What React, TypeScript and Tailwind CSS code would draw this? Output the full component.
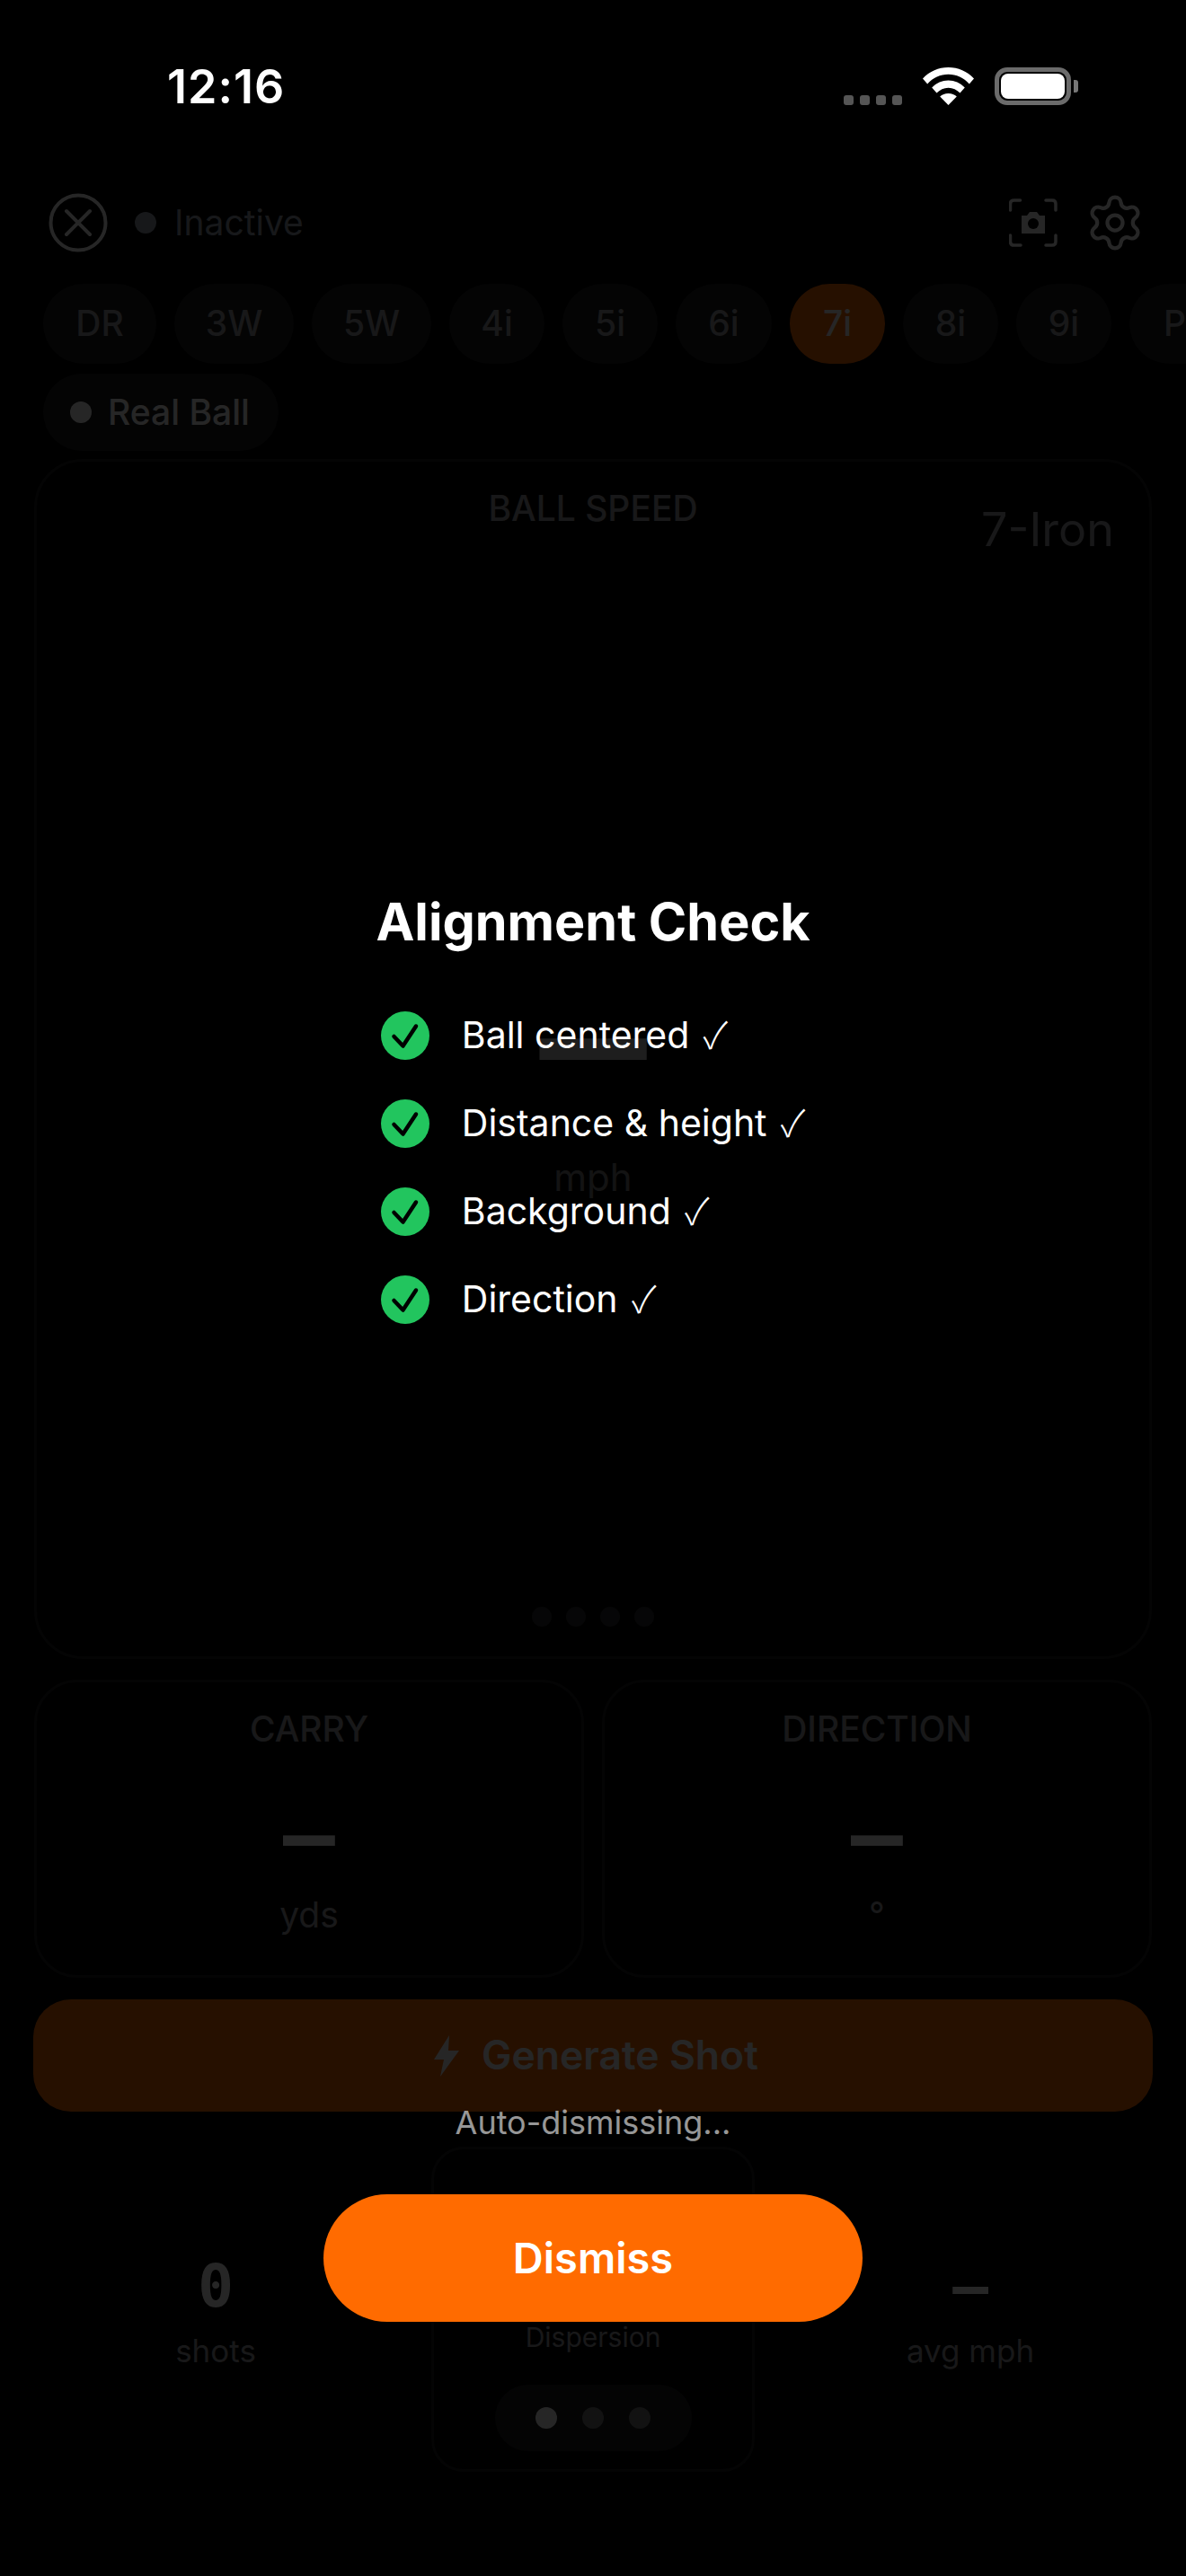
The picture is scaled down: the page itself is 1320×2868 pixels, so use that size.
import { Settings } from "lucide-react";

const clubs = [
  { name: "DR", width: "w-[126px]" },
  { name: "3W", width: "w-[133px]" },
  { name: "5W", width: "w-[133px]" },
  { name: "4i", width: "w-[106px]" },
  { name: "5i", width: "w-[106px]" },
  { name: "6i", width: "w-[107px]" },
  { name: "7i", width: "w-[106px]" },
  { name: "8i", width: "w-[106px]" },
  { name: "9i", width: "w-[106px]" },
  { name: "PW", width: "w-[140px]" },
];
const checks = ["Ball centered", "Distance & height", "Background", "Direction"];
const mono = "font-['DejaVu_Sans_Mono',monospace]";

function StatusBar() {
  return (
    <div className="relative z-20 h-[215px] shrink-0 -mb-[215px] flex items-start justify-between pl-[186px] pr-[120px] pt-[66px]">
      <span className="text-[52px] leading-[62px] font-semibold text-white tracking-[1px]">12:16</span>
      <div className="flex items-start pt-[9px]">
        <div className="flex gap-[7px] mt-[31px] mr-[23px]">
          <div className="w-[11px] h-[11px] rounded-[3px] bg-[#555]" />
          <div className="w-[11px] h-[11px] rounded-[3px] bg-[#555]" />
          <div className="w-[11px] h-[11px] rounded-[3px] bg-[#555]" />
          <div className="w-[11px] h-[11px] rounded-[3px] bg-[#555]" />
        </div>
        <svg width="57" height="42" viewBox="0 0 57 42" className="mr-[23px]">
          <path fill="#fff" d="M28.5 0C17.5 0 7.7 4.3 0 12.5l5.2 6C11.5 11.5 19.6 7.8 28.5 7.8s17 3.7 23.3 10.7l5.2-6C49.3 4.3 39.5 0 28.5 0z" />
          <path fill="#fff" d="M28.5 14.5c-7 0-13.2 2.8-18.3 8l5.3 6c3.5-3.5 8-5.8 13-5.8s9.5 2.3 13 5.8l5.3-6c-5.1-5.2-11.3-8-18.3-8z" />
          <path fill="#fff" d="M28.5 29c-3.8 0-7 1.3-9.3 3.5L28.5 42l9.3-9.5c-2.3-2.2-5.5-3.5-9.3-3.5z" />
        </svg>
        <div className="w-[85px] h-[42px] rounded-[14px] border-[5px] border-[#6b6b6b] p-[2px]">
          <div className="w-full h-full rounded-[8px] bg-white" />
        </div>
        <div className="w-[5px] h-[14px] mt-[14px] ml-[3px] rounded-r-[3px] bg-[#777]" />
      </div>
    </div>
  );
}

function Header() {
  return (
    <div className="flex items-center justify-between pl-[54px] pr-[50px] h-[66px] mt-[215px]">
      <div className="flex items-center">
        <svg width="66" height="66" viewBox="0 0 66 66" fill="none" stroke="#fff" strokeWidth="4" strokeLinecap="round">
          <circle cx="33" cy="33" r="30.5" />
          <path d="M20 20l26 26M46 20L20 46" />
        </svg>
        <div className="w-[24px] h-[24px] rounded-full bg-gray-400 ml-[30px]" />
        <span className="ml-[20px] text-[39px] text-gray-400">Inactive</span>
      </div>
      <div className="flex items-center">
        <svg width="54" height="54" viewBox="0 0 54 54" fill="none" stroke="#fff" strokeWidth="3.5" className="mr-[30px]">
          <path d="M1.5 13V6q0-4 4-4h7M41 2h7q4 0 4 4v7M52 41v7q0 4-4 4h-7M13 52H5.5q-4 0-4-4v-7" strokeLinecap="round" />
          <path d="M14 19h6l3-4h8l3 4h6v20H14z" fill="#fff" stroke="none" />
          <circle cx="27" cy="28" r="6" fill="#000" stroke="none" />
        </svg>
        <Settings size={68} strokeWidth={1.5} className="text-white -mr-[5px]" />
      </div>
    </div>
  );
}

function ClubRow() {
  return (
    <div className="flex gap-[20px] pl-[48px] mt-[35px] overflow-hidden">
      {clubs.map((c) => (
        <div
          key={c.name}
          className={`h-[89px] shrink-0 rounded-full flex items-center justify-center text-[39px] font-medium ${c.width} ${
            c.name === "7i" ? "bg-[#ff6b00] text-white" : "bg-[#1c1c1e] text-[#a0a0a5]"
          }`}
        >
          {c.name}
        </div>
      ))}
    </div>
  );
}

function SmallCard({ label, unit }: { label: string; unit: string }) {
  return (
    <div className="h-[332px] rounded-[48px] border-[3px] border-[#1c1c1e] bg-[#050505] flex flex-col items-center pt-[28px]">
      <div className="text-[39px] leading-[48px] font-medium text-[#a0a0a5]">{label}</div>
      <div className={`${mono} text-[96px] leading-[112px] font-bold text-white mt-[38px]`}>—</div>
      <div className="text-[39px] leading-[48px] text-[#a0a0a5] mt-[9px]">{unit}</div>
    </div>
  );
}

function Stat({ value, label }: { value: string; label: string }) {
  return (
    <div className="flex flex-col items-center pt-[116px]">
      <div className={`${mono} text-[66px] leading-[80px] font-bold text-white`}>{value}</div>
      <div className="text-[35px] leading-[44px] text-[#a0a0a5] mt-[9px]">{label}</div>
    </div>
  );
}

function Background() {
  return (
    <div className="flex flex-col">
      <Header />
      <ClubRow />
      <div className="ml-[48px] mt-[11px] w-[262px] h-[86px] rounded-full bg-[#1c1c1e] flex items-center pl-[30px]">
        <div className="w-[24px] h-[24px] rounded-full bg-white" />
        <span className="ml-[18px] text-[39px] font-medium text-white">Real Ball</span>
      </div>

      {/* main ball speed card */}
      <div className="relative mx-[38px] mt-[9px] h-[1336px] rounded-[54px] border-[3px] border-[#1c1c1e] bg-[#050505] flex flex-col items-center pt-[28px]">
        <div className="text-[39px] leading-[48px] font-medium text-[#a0a0a5]">BALL SPEED</div>
        <div className="absolute right-[39px] top-[46px] text-[52px] leading-[60px] text-[#a0a0a5]">7-Iron</div>
        <div className={`${mono} text-[198px] leading-[230px] font-bold text-[#c8c8c8] mt-[450px]`}>—</div>
        <div className="text-[42px] leading-[50px] text-[#808080] mt-[16px]">mph</div>
        <div className="flex gap-[16px] mt-[453px]">
          <div className="w-[22px] h-[22px] rounded-full bg-[#2c2c2e]" />
          <div className="w-[22px] h-[22px] rounded-full bg-[#2c2c2e]" />
          <div className="w-[22px] h-[22px] rounded-full bg-[#2c2c2e]" />
          <div className="w-[22px] h-[22px] rounded-full bg-[#2c2c2e]" />
        </div>
      </div>

      <div className="grid grid-cols-2 gap-[20px] mx-[38px] mt-[23px]">
        <SmallCard label="CARRY" unit="yds" />
        <SmallCard label="DIRECTION" unit="°" />
      </div>

      <div className="mx-[37px] mt-[24px] h-[125px] rounded-[42px] bg-[#ff6b00] flex items-center justify-center pl-[6px]">
        <svg width="30" height="46" viewBox="0 0 30 46" fill="#fff" className="mr-[24px]">
          <path d="M18 0 1 27h11L8 46l21-29H17z" />
        </svg>
        <span className="text-[44.5px] font-semibold text-white">Generate Shot</span>
      </div>

      <div className="grid grid-cols-3 gap-[60px] px-[60px] mt-[39px]">
        <Stat value="0" label="shots" />
        <div className="h-[362px] rounded-[36px] border-[3px] border-[#1c1c1e] bg-[#050505] flex flex-col items-center pt-[190px]">
          <div className="text-[30px] leading-[38px] text-[#a0a0a5]">Dispersion</div>
          <div className="mt-[34px] w-[219px] h-[74px] rounded-full bg-[#1c1c1e] flex items-center justify-center gap-[28px]">
            <div className="w-[24px] h-[24px] rounded-full bg-white" />
            <div className="w-[24px] h-[24px] rounded-full bg-[#777]" />
            <div className="w-[24px] h-[24px] rounded-full bg-[#777]" />
          </div>
        </div>
        <Stat value="—" label="avg mph" />
      </div>
    </div>
  );
}

function AlignmentOverlay() {
  return (
    <div className="absolute inset-0 z-10 bg-black/85 flex flex-col items-center pt-[991px]">
      <h2 className="text-[57.5px] leading-[70px] font-bold text-white">Alignment Check</h2>
      <div className="flex flex-col gap-[44px] mt-[65px]">
        {checks.map((c) => (
          <div key={c} className="flex items-center h-[54px]">
            <svg width="54" height="54" viewBox="0 0 54 54">
              <circle cx="27" cy="27" r="27" fill="#22c55e" />
              <path d="M14.5 28l10 10.5L39 16.5" fill="none" stroke="#000" strokeWidth="4.5" strokeLinecap="round" strokeLinejoin="round" />
            </svg>
            <span className="ml-[36px] pb-[3px] text-[41px] text-white">
              {c} <span className="ml-[4px] font-['Noto_Sans_CJK_JP',sans-serif] font-light">✓</span>
            </span>
          </div>
        ))}
      </div>
      <div className="text-[36px] leading-[44px] text-white/60 mt-[867px]">Auto-dismissing...</div>
      <button className="mt-[58px] w-[600px] h-[142px] rounded-full bg-[#ff6b00] text-[47px] font-semibold text-white">
        Dismiss
      </button>
    </div>
  );
}

export default function App() {
  return (
    <div className="relative w-[1320px] h-[2868px] bg-black overflow-hidden font-['Inter',sans-serif]">
      <StatusBar />
      <Background />
      <AlignmentOverlay />
    </div>
  );
}
